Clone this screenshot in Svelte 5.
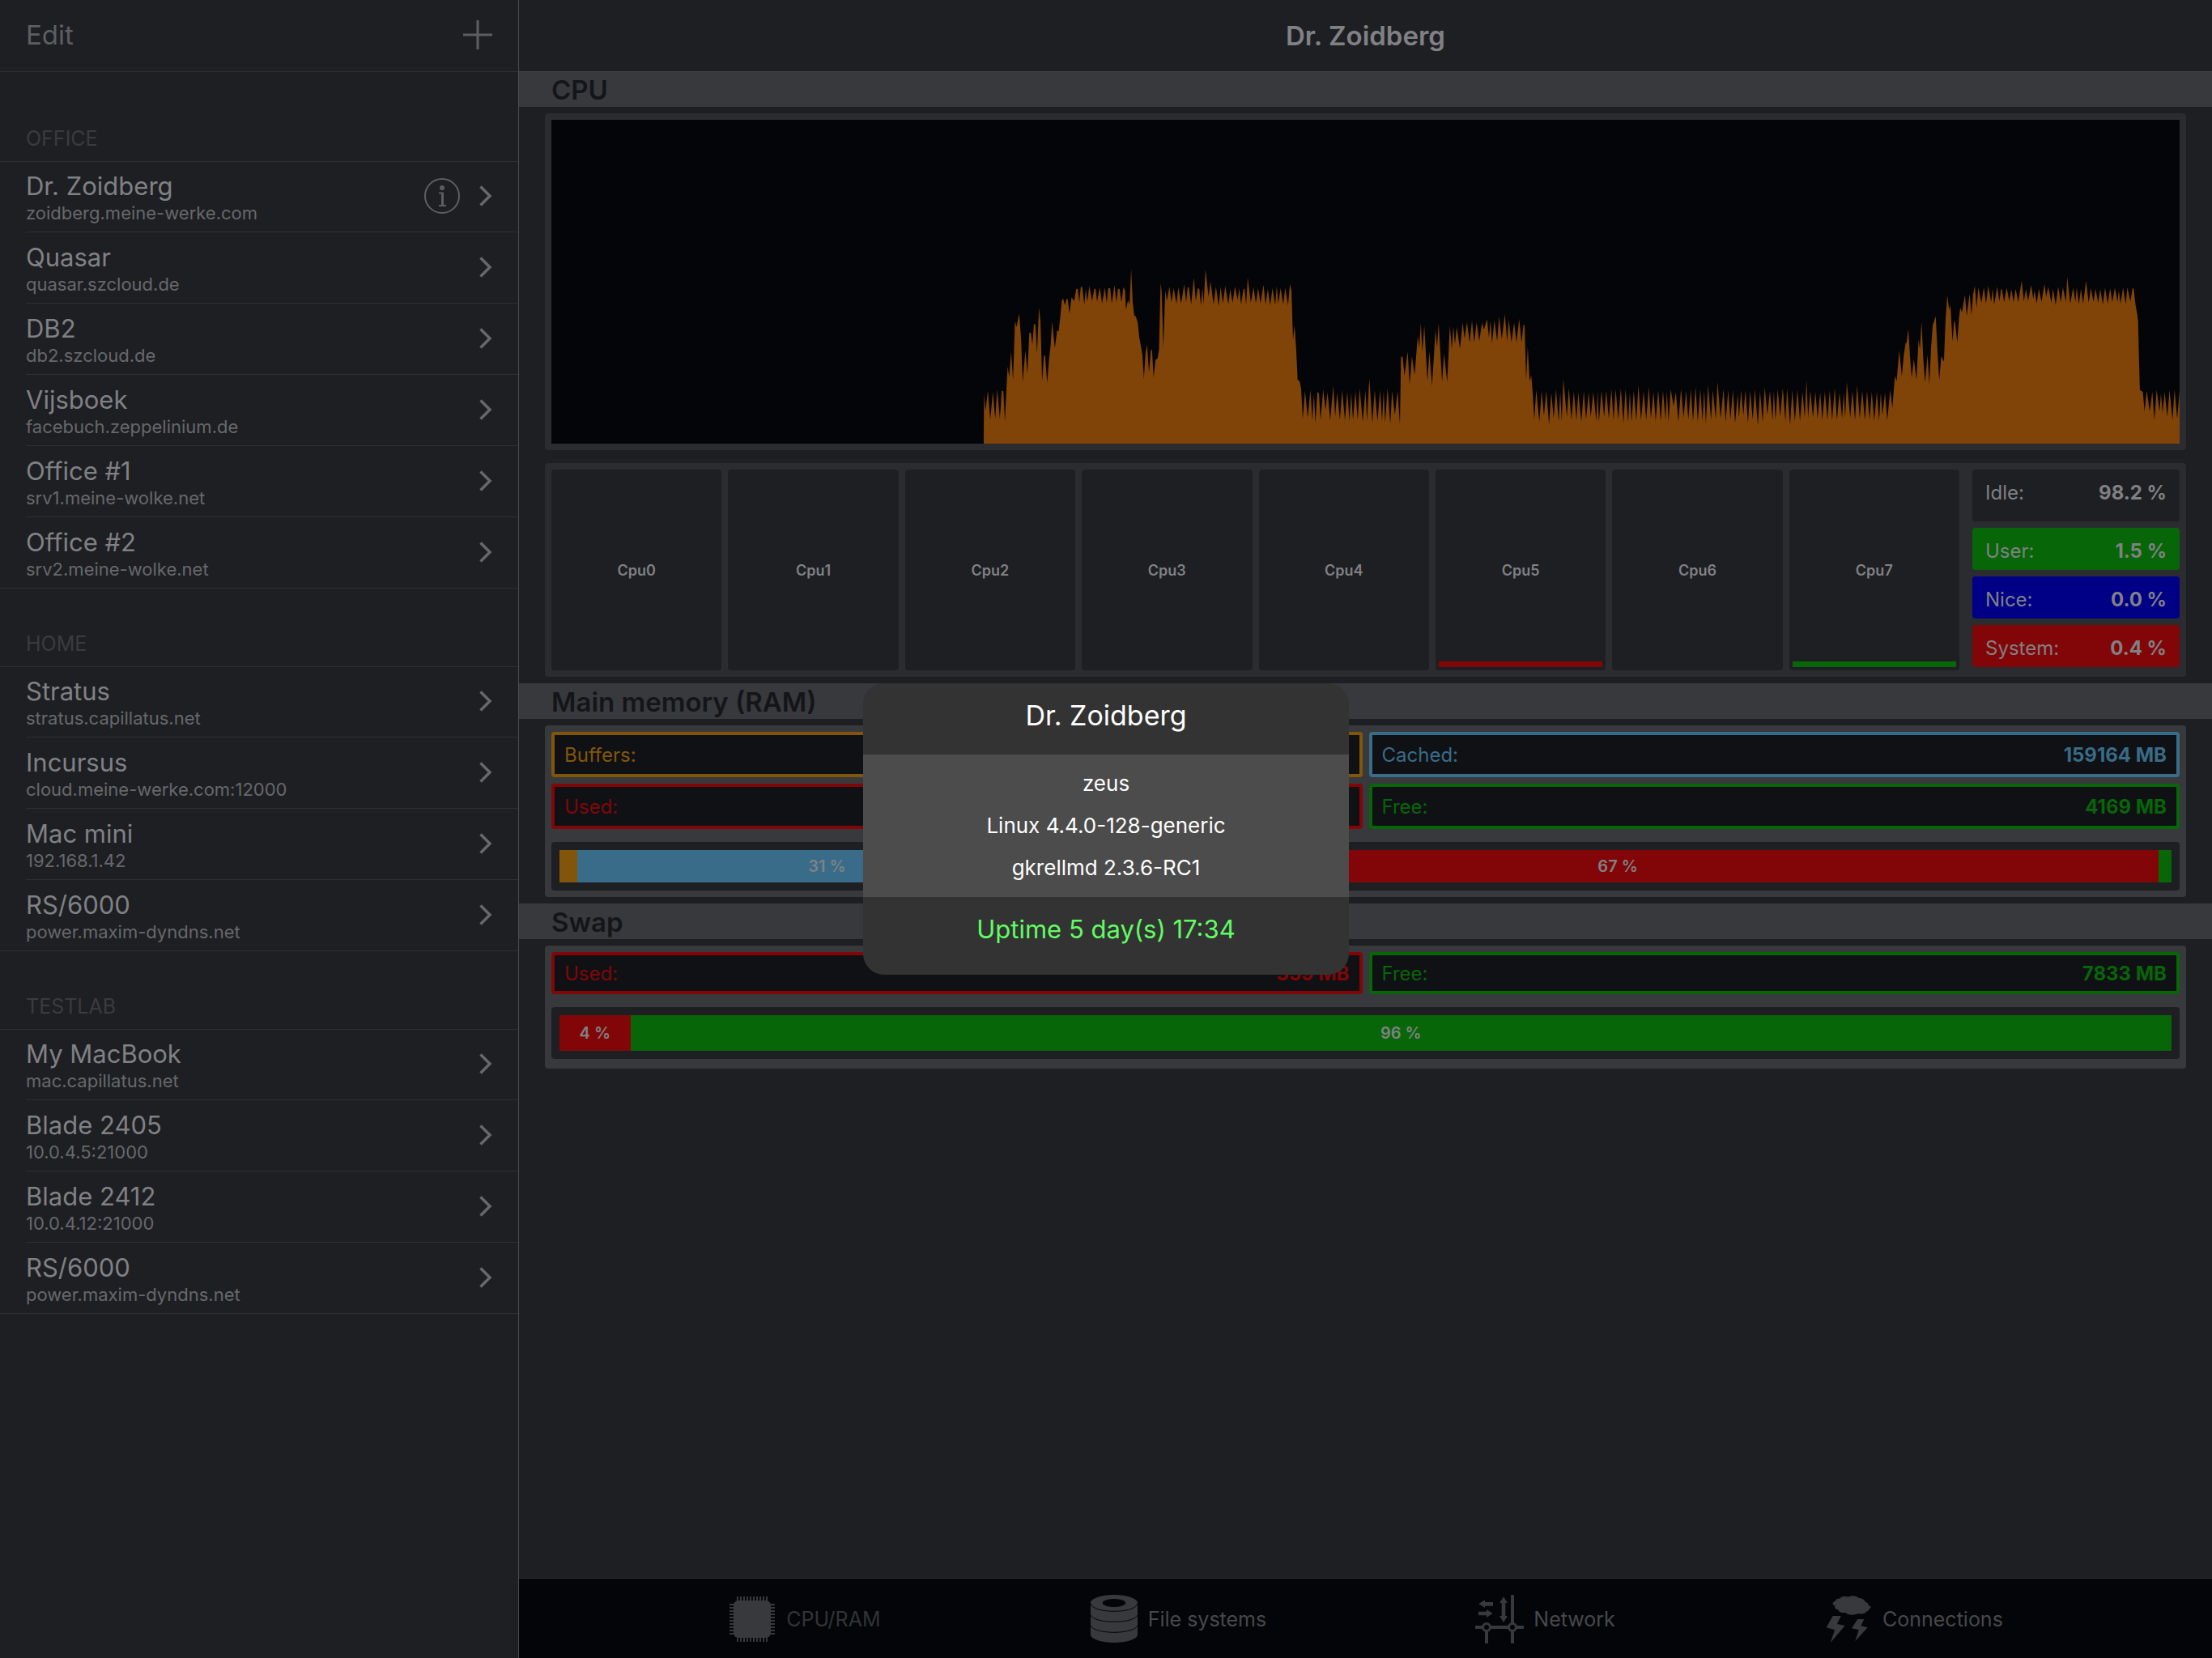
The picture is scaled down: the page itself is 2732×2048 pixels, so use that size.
<script>
  const groups = [
    {
      name: 'Office',
      servers: [
        { name: 'Dr. Zoidberg', host: 'zoidberg.meine-werke.com', info: true },
        { name: 'Quasar', host: 'quasar.szcloud.de' },
        { name: 'DB2', host: 'db2.szcloud.de' },
        { name: 'Vijsboek', host: 'facebuch.zeppelinium.de' },
        { name: 'Office #1', host: 'srv1.meine-wolke.net' },
        { name: 'Office #2', host: 'srv2.meine-wolke.net' }
      ]
    },
    {
      name: 'Home',
      servers: [
        { name: 'Stratus', host: 'stratus.capillatus.net' },
        { name: 'Incursus', host: 'cloud.meine-werke.com:12000' },
        { name: 'Mac mini', host: '192.168.1.42' },
        { name: 'RS/6000', host: 'power.maxim-dyndns.net' }
      ]
    },
    {
      name: 'Testlab',
      servers: [
        { name: 'My MacBook', host: 'mac.capillatus.net' },
        { name: 'Blade 2405', host: '10.0.4.5:21000' },
        { name: 'Blade 2412', host: '10.0.4.12:21000' },
        { name: 'RS/6000', host: 'power.maxim-dyndns.net' }
      ]
    }
  ];

  const cores = [
    { name: 'Cpu0' },
    { name: 'Cpu1' },
    { name: 'Cpu2' },
    { name: 'Cpu3' },
    { name: 'Cpu4' },
    { name: 'Cpu5', load: 'red' },
    { name: 'Cpu6' },
    { name: 'Cpu7', load: 'green' }
  ];

  const usage = [
    { label: 'Idle:', value: '98.2 %', tone: 'idle' },
    { label: 'User:', value: '1.5 %', tone: 'green' },
    { label: 'Nice:', value: '0.0 %', tone: 'blue' },
    { label: 'System:', value: '0.4 %', tone: 'red' }
  ];

  const ram = [
    { label: 'Buffers:', value: '', tone: 'orange' },
    { label: 'Cached:', value: '159164 MB', tone: 'sky' },
    { label: 'Used:', value: '', tone: 'red' },
    { label: 'Free:', value: '4169 MB', tone: 'green' }
  ];
  const ramShare = [
    { share: 1.1, tone: 'orange', text: '' },
    { share: 31, tone: 'sky', text: '31 %' },
    { share: 67.1, tone: 'red', text: '67 %' },
    { share: 0.8, tone: 'green', text: '' }
  ];
  const swap = [
    { label: 'Used:', value: '359 MB', tone: 'red' },
    { label: 'Free:', value: '7833 MB', tone: 'green' }
  ];
  const swapShare = [
    { share: 4.4, tone: 'red', text: '4 %' },
    { share: 95.6, tone: 'green', text: '96 %' }
  ];

  const pins = Array.from({ length: 10 }, (_, i) => 11 + i * 4);

  // Load samples as "time,level" pairs; level is counted in thirds of a pixel from the top.
  const early = '32,560 36,622 42,548 48,655 55,552 61,652 66,542 73,652 78,548 82,548 86,660 93,458 97,497 102,403 107,508 112,290 116,312 123,262 128,360 132,515 139,398 144,485 149,333 153,333 157,378 161,300 165,302 169,410 174,240 178,290 182,515 187,416 190,420 195,520 200,430 204,380 208,292 215,390 221,325 225,328 229,275 233,215 236,205 241,232 245,208 248,208 253,262 258,202 265,215 270,172 274,170 278,220 282,162 286,165 291,228 295,172 299,218 304,160 311,215 317,170 320,170 324,217 331,166 337,224 344,166 349,222 353,168 358,168 362,225 369,156 374,220 378,170 382,170 387,220 392,164 396,175 399,247 404,212 408,228 412,96 416,220 420,270 424,272 429,295 433,350 437,380 441,415 445,503 449,410 453,377 458,480 463,394 466,400 470,498 475,432 480,430 484,395 488,150 491,180 495,390 500,175 504,215 511,162 516,220 522,168 529,226 534,165 541,226 549,153 554,220 558,165 561,165 567,228 574,128 579,215 584,168 588,170 592,232 596,168 599,228 604,98 612,200 617,143 625,228 631,162 638,235 643,163 649,224 655,160 663,228 668,172 674,222 680,162 687,212 691,168 696,228 702,170 705,172 709,230 713,128 721,222 728,164 734,224 740,168 746,224 754,155 759,228 765,172 771,232 777,168 784,230 788,160 792,225 798,168 805,228 810,166 817,232 822,152 826,178 830,360 834,305 838,390 842,508 847,512 851,540 855,652 861,548 868,648 875,545 880,658 884,560 888,668 893,552 897,558 901,656 908,542 914,620 919,553 926,656 934,530 939,642 944,555 951,656 957,546 964,656 970,551 976,662 980,556 985,656 991,549 997,656 1002,538 1010,662 1017,546 1021,660 1027,502 1035,666 1041,546 1048,660 1055,546 1060,660 1064,550 1068,665 1074,538 1081,670 1086,548 1093,638 1100,548 1106,672 1109,422 1113,422 1118,492 1126,402 1131,525 1137,420 1144,490 1152,345 1156,390 1160,296 1164,405 1169,305 1177,512 1182,402 1189,530 1198,322 1202,388 1206,296 1215,515 1220,410 1228,515 1235,307 1240,393 1244,310 1248,375 1253,312 1261,393 1268,296 1273,355 1279,294 1286,368 1292,288 1298,370 1304,294 1311,364 1318,296 1323,322 1331,283 1336,350 1340,288 1344,372 1350,288 1357,364 1362,273 1369,356 1377,265 1383,364 1387,285 1394,368 1401,296 1407,368 1414,281 1420,370 1425,303 1428,306 1432,508 1436,385 1441,513 1445,490 1449,560 1453,655 1458,545 1466,662 1472,549 1478,640 1484,548 1491,672 1497,555 1503,650 1509,542 1516,662 1520,552 1524,660 1528,505 1537,645 1542,538 1549,656 1555,551 1562,656';
  const late = '93,553 100,662 106,549 111,655 117,555 122,645 128,553 135,660 138,548 141,663 147,549 153,645 158,548 164,650 170,543 175,656 180,542 186,655 192,540 198,668 203,542 209,663 213,555 217,663 222,549 228,658 233,528 239,656 245,551 251,656 257,534 262,650 268,553 273,660 279,546 285,660 290,548 296,655 299,550 303,662 308,542 315,606 320,553 326,663 332,541 338,648 344,549 349,655 355,543 360,660 366,534 371,662 377,542 382,660 386,546 390,668 395,528 402,656 406,546 413,652 417,515 424,650 431,542 436,662 442,546 447,655 453,545 458,668 464,560 467,648 472,546 477,640 482,546 488,667 493,549 499,655 504,542 511,674 516,550 522,663 527,534 533,637 539,548 545,656 548,550 552,656 557,542 563,644 569,538 575,660 579,539 586,674 591,546 597,660 603,545 609,660 615,552 620,648 624,508 628,648 633,549 639,645 645,553 650,650 656,555 661,655 667,551 673,656 678,546 684,656 690,538 695,656 701,555 707,650 711,556 714,648 718,516 726,648 731,549 737,656 742,528 748,650 754,549 760,658 765,548 771,655 776,552 782,660 788,551 793,660 797,556 801,638 807,555 812,658 819,545 824,612 830,493 834,513 840,398 846,494 851,410 855,370 857,372 861,318 865,420 869,500 874,430 880,508 885,358 888,395 892,292 896,430 900,517 906,415 910,524 914,390 918,305 925,272 929,400 933,508 938,420 944,440 948,280 952,195 956,248 959,230 964,365 968,288 970,295 975,370 979,280 982,240 986,258 993,193 997,270 1004,190 1008,268 1012,190 1016,160 1020,240 1024,165 1031,222 1037,165 1042,225 1047,160 1054,220 1057,170 1061,228 1068,163 1073,217 1077,172 1079,172 1084,220 1090,166 1096,215 1101,172 1106,220 1111,170 1117,220 1125,140 1130,217 1135,172 1140,215 1147,156 1152,208 1155,178 1160,225 1165,170 1171,218 1178,152 1182,200 1187,163 1194,222 1198,170 1204,230 1210,162 1216,220 1221,165 1228,220 1231,125 1238,225 1245,166 1250,220 1253,165 1258,228 1263,170 1268,225 1275,140 1281,222 1286,168 1292,218 1297,170 1303,222 1308,172 1314,228 1319,166 1325,226 1331,168 1336,220 1342,166 1348,218 1351,176 1355,225 1361,166 1367,228 1371,164 1378,218 1383,168 1386,170 1390,230 1394,265 1396,290 1398,430 1400,545 1407,552 1411,625 1416,548 1423,625 1429,552 1434,658 1439,545 1446,625 1449,558 1453,630 1458,553 1464,645 1469,545 1476,656 1481,543 1487,652 1493,540';

  const scaled = (samples, start, rate) =>
    samples.split(' ').map((pair) => {
      const [t, level] = pair.split(',').map(Number);
      return `${(start + t / rate).toFixed(1)},${(152 + level / 3).toFixed(1)}`;
    });

  const area = ['534,400', ...scaled(early, 519, 2.0907), ...scaled(late, 1219, 1.8846), '2011,400'].join(' ');
</script>

{#snippet readings(items)}
  <dl class="readings">
    {#each items as item}
      <div class="reading line-{item.tone}">
        <dt>{item.label}</dt>
        <dd>{item.value}</dd>
      </div>
    {/each}
  </dl>
{/snippet}

{#snippet shareBar(parts)}
  <div class="track">
    {#each parts as part}
      <div class="part fill-{part.tone}" style="flex-grow: {part.share}">{part.text}</div>
    {/each}
  </div>
{/snippet}

<div class="app">
  <aside class="sidebar">
    <header class="topbar tools">
      <button class="edit">Edit</button>
      <button class="add" aria-label="Add server">
        <svg viewBox="0 0 36 36"><path d="M18 0V36M0 18H36" stroke="currentColor" stroke-width="3" /></svg>
      </button>
    </header>
    {#each groups as group}
      <section class="group">
        <h3>{group.name}</h3>
        <ul>
          {#each group.servers as server}
            <li>
              <a href="#server">
                <span class="name">{server.name}</span>
                <span class="host">{server.host}</span>
              </a>
              {#if server.info}
                <button class="info" aria-label="Server details">
                  <svg viewBox="0 0 44 44" fill="none" stroke="currentColor">
                    <circle cx="22" cy="22" r="21" stroke-width="2" />
                    <circle cx="22" cy="12" r="3" fill="currentColor" stroke="none" />
                    <path d="M18 18.500H23V33" stroke-width="2" />
                    <path d="M22.500 18V34" stroke-width="3" />
                    <path d="M18 34H27" stroke-width="2" />
                  </svg>
                </button>
              {/if}
              <svg class="chevron" viewBox="0 0 16 26" fill="none" stroke="currentColor" stroke-width="3.500">
                <path d="M1.500 1.500L13 13L1.500 24.500" />
              </svg>
            </li>
          {/each}
        </ul>
      </section>
    {/each}
  </aside>

  <main>
    <header class="topbar"><h1>Dr. Zoidberg</h1></header>

    <h2 class="first">CPU</h2>
    <div class="panel">
      <svg class="graph" viewBox="0 0 2011 400" preserveAspectRatio="none" role="img" aria-label="CPU load">
        <polygon points={area} />
      </svg>
    </div>
    <div class="panel cpus">
      <div class="cores">
        {#each cores as core}
          <div class="core">
            <span>{core.name}</span>
            {#if core.load}<i class="fill-{core.load}"></i>{/if}
          </div>
        {/each}
      </div>
      <dl class="usage">
        {#each usage as item}
          <div class="stat fill-{item.tone}">
            <dt>{item.label}</dt>
            <dd>{item.value}</dd>
          </div>
        {/each}
      </dl>
    </div>

    <h2>Main memory (RAM)</h2>
    <div class="panel memory">
      {@render readings(ram)}
      {@render shareBar(ramShare)}
    </div>

    <h2>Swap</h2>
    <div class="panel memory swap">
      {@render readings(swap)}
      {@render shareBar(swapShare)}
    </div>

    <nav class="tabs">
      <button class="current">
        <svg viewBox="0 0 60 60" fill="currentColor">
          <rect x="7" y="7" width="46" height="46" rx="6" />
          {#each pins as p}
            <path d="M{p} 2h2v6h-2zM{p} 52h2v6h-2zM2 {p}h6v2h-6zM52 {p}h6v2h-6z" />
          {/each}
        </svg>
        <span>CPU/RAM</span>
      </button>
      <button>
        <svg viewBox="0 0 60 60" fill="currentColor">
          <path fill-rule="evenodd" d="M30 0C46 0 59 4.500 59 10V49C59 54.500 46 59 30 59S1 54.500 1 49V10C1 4.500 14 0 30 0ZM30 5C22 5 15.700 7.200 15.700 10S22 15 30 15S44.300 12.800 44.300 10S38 5 30 5Z" />
          <path d="M1 11C3 17 15 20.300 30 20.300S57 17 59 11M1 25C3 30 15 33.300 30 33.300S57 30 59 25M1 38C3 43 15 46.300 30 46.300S57 43 59 38" fill="none" stroke="#040508" />
        </svg>
        <span>File systems</span>
      </button>
      <button>
        <svg viewBox="0 0 60 60" fill="currentColor">
          <path d="M0 38H9V42H0ZM19 38H41V42H19ZM51 38H60V42H51ZM12 45H16V60H12ZM44 45H48V60H44ZM44 0H48V35H44Z" />
          <path d="M4.300 11L12 6.300V9H22V13.700H12V16ZM4 20.700H14V18L21.700 23L14 28V25.300H4ZM35 2.300L40 10H37.300V26H40L35 34L30 26H32.700V10H30Z" />
          <g fill="none" stroke="currentColor" stroke-width="3"><circle cx="14" cy="40" r="4.500" /><circle cx="46" cy="40" r="4.500" /></g>
        </svg>
        <span>Network</span>
      </button>
      <button>
        <svg viewBox="0 0 60 60" fill="currentColor">
          <path d="M10.300 11C11 9 12 8 14.500 7C15 5 17 4.300 19.500 4.500C21 2 25 1 29.500 2.500C34 .5 40 .5 42.500 4C46 4 50 5.500 51 9C54 9.500 55 11.500 54.500 13C57 13.500 58 14.500 57.700 15.500C55.500 17 56 19 52.500 20.500C51 23 47 24.500 42 23C37 25.500 29 25.500 26.500 22C22 22.500 18 21.500 17.500 18.500C14 18 12.500 16 13.500 13.500C12 13 10.800 12 10.300 11Z" />
          <path d="M10.700 26H20.700L16 36L25.700 38L7.700 59.300L13 43.300L2.700 40.300ZM41.300 30H49.300L45.300 38.300L53.700 40.300L38.300 57.300L42.700 43.300L34 41.300Z" />
        </svg>
        <span>Connections</span>
      </button>
    </nav>
  </main>

  <div class="popup" role="dialog" aria-labelledby="popup-title">
    <h2 id="popup-title">Dr. Zoidberg</h2>
    <div class="details">
      <p>zeus</p>
      <p>Linux 4.4.0-128-generic</p>
      <p>gkrellmd 2.3.6-RC1</p>
    </div>
    <p class="uptime">Uptime 5 day(s) 17:34</p>
  </div>
</div>

<style>
  :global(body) {
    margin: 0;
    background: #1e1f23;
  }
  .app, .app * {
    box-sizing: border-box;
  }
  .app {
    position: relative;
    display: flex;
    min-height: 100vh;
    background: #1e1f23;
    color: #808184;
    font-family: Inter, "Liberation Sans", sans-serif;
    font-size: 24px;
  }
  h1, h2, h3, p, ul, dl, dd {
    margin: 0;
    padding: 0;
  }
  ul {
    list-style: none;
  }
  button {
    padding: 0;
    border: 0;
    background: none;
    font: inherit;
    color: inherit;
  }
  svg {
    display: block;
  }

  .sidebar {
    flex: none;
    width: 641px;
    border-right: 1px solid #4b4c4f;
  }
  .topbar {
    display: flex;
    align-items: center;
    justify-content: center;
    height: 88px;
  }
  .tools {
    height: 89px;
    justify-content: space-between;
    padding: 0 32px 2px;
    border-bottom: 1px solid #2e2f32;
    color: #5d5e61;
  }
  .edit {
    font-size: 33px;
  }
  .add svg {
    width: 36px;
    height: 36px;
  }
  .group h3 {
    height: 96px;
    padding: 0 32px 12px;
    display: flex;
    align-items: end;
    font-size: 25px;
    line-height: 32px;
    font-weight: 400;
    text-transform: uppercase;
    color: #3a3b3f;
  }
  .tools + .group {
    padding-top: 14px;
  }
  .group ul {
    border-top: 1px solid #2e2f32;
    border-bottom: 1px solid #2e2f32;
  }
  li {
    display: flex;
    align-items: center;
    height: 88px;
    margin-left: 32px;
    padding: 0 32px 2px 0;
    border-bottom: 1px solid #2e2f32;
  }
  li:first-child {
    height: 87px;
  }
  li:last-child {
    height: 87px;
    border-bottom: 0;
  }
  li a {
    flex: 1;
    display: flex;
    flex-direction: column;
    padding-top: 4px;
    color: inherit;
    text-decoration: none;
  }
  .name {
    font-size: 31px;
    line-height: 38px;
  }
  .host {
    font-size: 22px;
    line-height: 28px;
    color: #67686b;
  }
  .info {
    margin-right: 24px;
    color: #5d5e61;
  }
  .info svg {
    width: 44px;
    height: 44px;
  }
  .chevron {
    width: 16px;
    height: 26px;
    color: #67686b;
  }

  main {
    flex: 1;
    min-width: 0;
    display: flex;
    flex-direction: column;
  }
  h1 {
    font-size: 33px;
    font-weight: 600;
  }
  main h2 {
    height: 44px;
    padding: 2px 0 0 40px;
    background: #38393d;
    color: #141519;
    font-size: 33px;
    line-height: 42px;
    font-weight: 600;
  }
  main .first {
    box-shadow: inset 0 1px #434447;
  }
  .panel {
    margin: 8px 32px;
    padding: 8px;
    border-radius: 4px;
    background: #2b2c30;
  }
  .graph {
    width: 100%;
    height: 400px;
    background: #040508;
  }
  .graph polygon {
    fill: #804408;
  }
  .cpus {
    display: flex;
    gap: 16px;
  }
  .cores {
    flex: 1;
    display: flex;
    gap: 8px;
  }
  .core {
    flex: 1;
    position: relative;
    display: flex;
    align-items: center;
    justify-content: center;
    height: 248px;
    border-radius: 4px;
    background: #1e1f23;
    font-size: 18px;
    font-weight: 600;
  }
  .core i {
    position: absolute;
    left: 4px;
    right: 4px;
    bottom: 4px;
    height: 7px;
  }
  .usage {
    width: 256px;
    display: flex;
    flex-direction: column;
    gap: 8px;
  }
  .stat {
    display: flex;
    justify-content: space-between;
    height: 52px;
    padding: 13px 16px 0;
    border-radius: 4px;
    line-height: 32px;
  }
  .fill-idle {
    height: 64px;
    background: #1e1f23;
  }
  dd {
    font-weight: 700;
  }
  .fill-green { background: #066608; }
  .fill-blue { background: #000086; }
  .fill-red { background: #820608; }
  .fill-orange { background: #82560a; }
  .fill-sky { background: #386c88; }
  .line-green { color: #066608; }
  .line-red { color: #820608; }
  .line-orange { color: #82560a; }
  .line-sky { color: #386c88; }

  .memory {
    background: #38393d;
  }
  .readings {
    display: grid;
    grid-template-columns: 1fr 1fr;
    gap: 8px;
  }
  .reading {
    display: flex;
    align-items: center;
    justify-content: space-between;
    height: 56px;
    padding: 0 12px;
    border: 4px solid;
    border-radius: 4px;
    background: #101114;
  }
  .track {
    display: flex;
    height: 60px;
    margin-top: 16px;
    padding: 10px;
    border-radius: 4px;
    background: #1e1f23;
  }
  .part {
    flex-basis: 0;
    display: flex;
    align-items: center;
    justify-content: center;
    font-size: 20px;
    font-weight: 600;
  }
  .swap {
    padding-bottom: 12px;
  }
  .swap :global(.reading) {
    height: 52px;
  }
  .swap :global(.track) {
    height: 64px;
  }

  .tabs {
    display: flex;
    justify-content: space-evenly;
    height: 99px;
    margin-top: auto;
    padding-top: 2px;
    border-top: 1px solid #2e2f32;
    background: #040508;
    color: #47484b;
  }
  .tabs button {
    display: flex;
    align-items: center;
    gap: 12px;
    font-size: 25px;
  }
  .tabs svg {
    width: 60px;
    height: 60px;
    color: #38393d;
  }
  .tabs .current {
    color: #323337;
  }

  .popup {
    position: absolute;
    top: 50%;
    left: 50%;
    transform: translate(-50%, -50%);
    width: 600px;
    overflow: hidden;
    border-radius: 26px;
    background: #333;
    color: #fff;
    text-align: center;
  }
  .popup h2 {
    height: 88px;
    padding-top: 18px;
    font-size: 34px;
    line-height: 44px;
    font-weight: 400;
  }
  .details {
    height: 176px;
    padding-top: 10px;
    background: #4c4c4c;
    font-size: 26px;
    line-height: 52px;
  }
  .uptime {
    height: 96px;
    padding-top: 18px;
    font-size: 31px;
    line-height: 44px;
    color: #62fc64;
  }
</style>
